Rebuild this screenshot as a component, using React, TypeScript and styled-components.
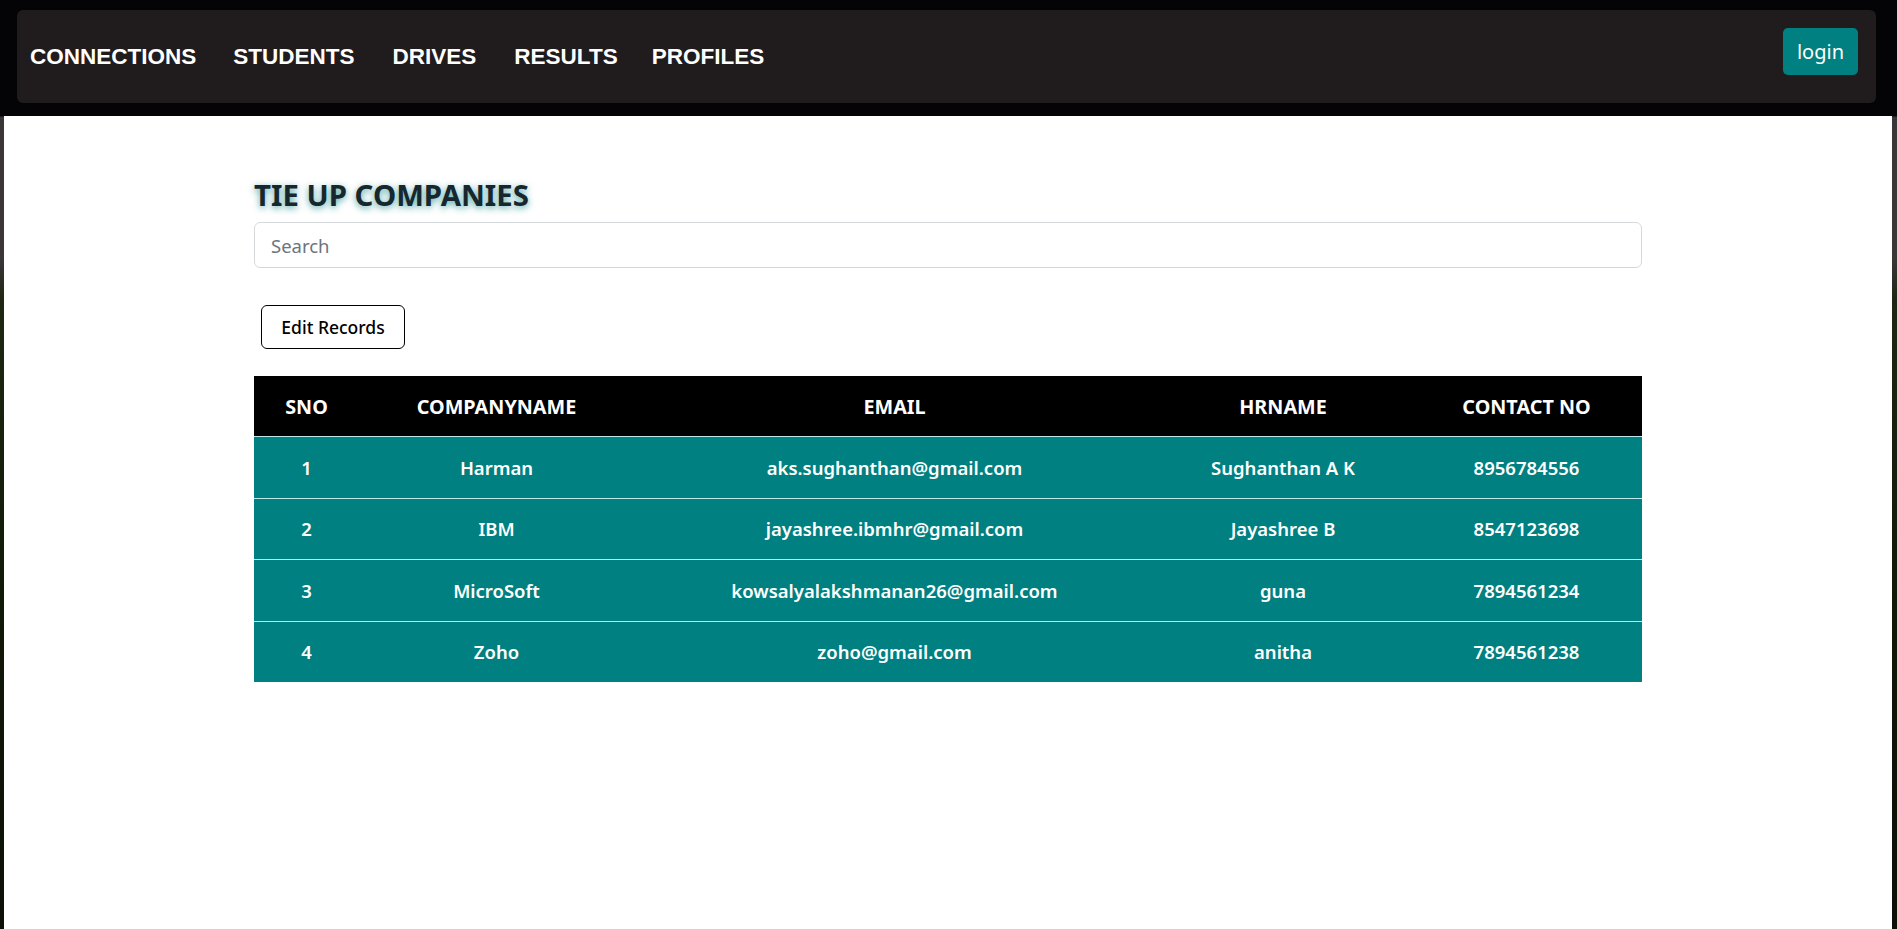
import React from "react";
import styled, { createGlobalStyle } from "styled-components";

const Global = createGlobalStyle`
  html, body {
    margin: 0;
    padding: 0;
  }
  body {
    min-height: 929px;
    background: linear-gradient(to bottom, #050407 0px, #050407 116px, #3a3637 117px, #3a3637 260px, #1f2613 300px, #121808 600px, #0c1006 100%);
    font-family: "Noto Sans", "Open Sans", sans-serif;
  }
  #root {
    min-height: 929px;
    display: flex;
    flex-direction: column;
  }
`;

const TopBar = styled.header`
  background: #040306;
  padding: 10px 21px 13px 17px;
`;

const NavBox = styled.nav`
  height: 93px;
  background: #201c1d;
  border-radius: 6px;
  display: flex;
  align-items: center;
  padding: 0 18px 0 13px;
  box-sizing: border-box;
`;

const NavLinks = styled.div`
  display: flex;
  align-items: center;
  flex: 1;
`;

const NavLink = styled.a<{ $gap?: number }>`
  margin-left: ${(p) => p.$gap ?? 0}px;
  font-family: "Liberation Sans", Arial, sans-serif;
  font-weight: 700;
  font-size: 22.5px;
  color: #ffffff;
  text-decoration: none;
  cursor: pointer;
`;

const LoginButton = styled.button`
  align-self: flex-start;
  margin-top: 18px;
  height: 47px;
  padding: 0 14px;
  background: #008080;
  color: #ffffff;
  border: none;
  border-radius: 5px;
  font-family: "Noto Sans", sans-serif;
  font-size: 20px;
  cursor: pointer;
`;

const Main = styled.main`
  flex: 1;
  background: #ffffff;
  margin: 0 5px 0 4px;
  padding-top: 61px;
`;

const Container = styled.div`
  width: 1388px;
  margin: 0 auto;
  display: flex;
  flex-direction: column;
  align-items: flex-start;
`;

const Title = styled.h2`
  margin: 0 0 9px 0;
  font-family: "Noto Sans", sans-serif;
  font-weight: 700;
  font-size: 29.4px;
  line-height: 36px;
  color: #17272d;
  text-shadow: 0 2px 7px rgba(0, 128, 128, 0.7);
`;

const SearchInput = styled.input`
  width: 100%;
  height: 46px;
  box-sizing: border-box;
  border: 1px solid #d6d9dc;
  border-radius: 6px;
  padding: 0 16px;
  font-family: "Noto Sans", sans-serif;
  font-size: 18.5px;
  color: #212529;
  outline: none;
  &::placeholder {
    color: #6c757d;
  }
`;

const EditButton = styled.button`
  margin: 37px 0 0 7px;
  width: 144px;
  height: 44px;
  background: #ffffff;
  border: 1px solid #000000;
  border-radius: 6px;
  font-family: "Noto Sans", sans-serif;
  font-weight: 500;
  font-size: 17.5px;
  color: #000000;
  cursor: pointer;
`;

const Table = styled.table`
  margin-top: 27px;
  width: 100%;
  border-collapse: collapse;
  table-layout: fixed;
  font-family: "Noto Sans", sans-serif;
`;

const HeadCell = styled.th<{ $w: number }>`
  width: ${(p) => p.$w}px;
  height: 60px;
  background: #000000;
  color: #ffffff;
  font-weight: 700;
  font-size: 19.8px;
  text-align: center;
  padding: 0;
`;

const Row = styled.tr`
  background: #008080;
  border-top: 1px solid #bfe8ea;
`;

const Cell = styled.td`
  height: 60.5px;
  color: #ffffff;
  font-weight: 600;
  font-size: 18.5px;
  text-align: center;
  padding: 0;
`;

const navItems = [
  { label: "CONNECTIONS", gap: 0 },
  { label: "STUDENTS", gap: 37 },
  { label: "DRIVES", gap: 38 },
  { label: "RESULTS", gap: 38 },
  { label: "PROFILES", gap: 34 },
];

const columns = [
  { label: "SNO", w: 105 },
  { label: "COMPANYNAME", w: 275 },
  { label: "EMAIL", w: 521 },
  { label: "HRNAME", w: 256 },
  { label: "CONTACT NO", w: 231 },
];

const rows = [
  ["1", "Harman", "aks.sughanthan@gmail.com", "Sughanthan A K", "8956784556"],
  ["2", "IBM", "jayashree.ibmhr@gmail.com", "Jayashree B", "8547123698"],
  ["3", "MicroSoft", "kowsalyalakshmanan26@gmail.com", "guna", "7894561234"],
  ["4", "Zoho", "zoho@gmail.com", "anitha", "7894561238"],
];

export default function App() {
  return (
    <>
      <Global />
      <TopBar>
        <NavBox>
          <NavLinks>
            {navItems.map((n) => (
              <NavLink key={n.label} $gap={n.gap}>
                {n.label}
              </NavLink>
            ))}
          </NavLinks>
          <LoginButton>login</LoginButton>
        </NavBox>
      </TopBar>
      <Main>
        <Container>
          <Title>TIE UP COMPANIES</Title>
          <SearchInput placeholder="Search" />
          <EditButton>Edit Records</EditButton>
          <Table>
            <thead>
              <tr>
                {columns.map((c) => (
                  <HeadCell key={c.label} $w={c.w}>
                    {c.label}
                  </HeadCell>
                ))}
              </tr>
            </thead>
            <tbody>
              {rows.map((r) => (
                <Row key={r[0]}>
                  {r.map((v, i) => (
                    <Cell key={i}>{v}</Cell>
                  ))}
                </Row>
              ))}
            </tbody>
          </Table>
        </Container>
      </Main>
    </>
  );
}
